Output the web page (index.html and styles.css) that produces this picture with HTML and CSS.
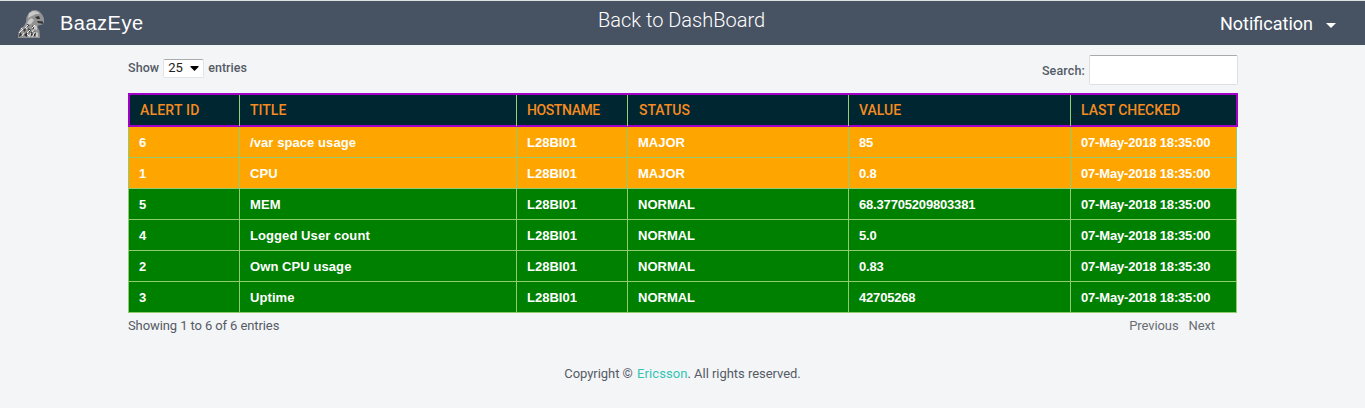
FILE: index.html
```html
<!DOCTYPE html>
<html lang="en">
<head>
<meta charset="utf-8">
<title>BaazEye</title>
<link rel="stylesheet" href="styles.css">
</head>
<body>
<header class="navbar">
  <a class="brand"><svg class="logo" viewBox="0 0 28 30" aria-hidden="true">
    <path d="M0 29 .5 23 3 19 6 17 8 13 8.5 8 11 4 14 1.5 18 1 21.5 2.5 24.5 6 26 9.5 26 14.5 23.5 12.5 21 13 25 15.5 20 16.5 19.5 18 21.5 22 22 29Z" fill="#929292"/>
    <path d="M11 4 15 2 19 2.5 22 5 18 5 14 7 10 9ZM10 12 13 9 16 11 13 15 8 18ZM16 16 19 17 19 21 16 20ZM18 23 20 24 20 28 18 28Z" fill="#c8c8c8"/>
    <path d="M17 8 21 7 22 10 19 10ZM19 12 25 12.5 24.5 14.5 20 14ZM1 28 2 23 4 26ZM5 21 8 19 7 23ZM6 26 9 23 9 28ZM10 19 13 21 11 24ZM12 25 14 22 15 28ZM14 16 17 20 15 21ZM16 22 18 25 16 28ZM9 15 12 16 9 18Z" fill="#333"/>
    <path d="m1 24 3-3m0 6 2-3M7 19l3-3m-1 8 3-3m-1 7 2-4m1-5 3-3m-3 7 3-4m-3 9 3-5m-14-4 2 2m2-3 2 2m0 5 2 2" stroke="#eee" stroke-width="1"/>
  </svg><span class="brand-name">BaazEye</span></a>
  <a class="back">Back to DashBoard</a>
  <a class="notification"><span>Notification</span><i class="caret"></i></a>
</header>
<main class="content">
  <div class="controls">
    <label class="length"><span>Show</span><span class="select"><span>25</span><svg width="9" height="5" viewBox="0 0 9 5"><path d="M.5 0h8v1L4.5 5 .5 1Z"/></svg></span><span>entries</span></label>
    <label class="search"><span>Search:</span><input type="text"></label>
  </div>
  <table class="alerts">
    <thead><tr><th>ALERT ID</th><th>TITLE</th><th class="hostname">HOSTNAME</th><th class="status">STATUS</th><th>VALUE</th><th>LAST CHECKED</th></tr></thead>
    <tbody>
      <tr class="major"><td>6</td><td>/var space usage</td><td>L28BI01</td><td>MAJOR</td><td>85</td><td>07-May-2018 18:35:00</td></tr>
      <tr class="major"><td>1</td><td>CPU</td><td>L28BI01</td><td>MAJOR</td><td>0.8</td><td>07-May-2018 18:35:00</td></tr>
      <tr><td>5</td><td>MEM</td><td>L28BI01</td><td>NORMAL</td><td>68.37705209803381</td><td>07-May-2018 18:35:00</td></tr>
      <tr><td>4</td><td>Logged User count</td><td>L28BI01</td><td>NORMAL</td><td>5.0</td><td>07-May-2018 18:35:00</td></tr>
      <tr><td>2</td><td>Own CPU usage</td><td>L28BI01</td><td>NORMAL</td><td>0.83</td><td>07-May-2018 18:35:30</td></tr>
      <tr><td>3</td><td>Uptime</td><td>L28BI01</td><td>NORMAL</td><td>42705268</td><td>07-May-2018 18:35:00</td></tr>
    </tbody>
  </table>
  <div class="table-footer"><span>Showing 1 to 6 of 6 entries</span><nav class="pager"><a>Previous</a><a>Next</a></nav></div>
</main>
<footer class="copyright">Copyright © <a>Ericsson</a>. All rights reserved.</footer>
</body>
</html>
```

FILE: styles.css
```css
* { box-sizing: border-box; }
body { margin: 0; height: 408px; overflow: hidden; background: #f3f5f7; color: #555b65; font: 13px/20px Roboto, sans-serif; }
.navbar { display: grid; grid-template-columns: 1fr auto 1fr; height: 45px; border-top: 1px solid #dde3e1; background: #475263; color: #fff; }
.brand { display: flex; align-items: center; padding-left: 18px; }
.logo { width: 28px; height: 30px; margin-top: 2px; }
.brand-name { margin-left: 14px; font: 20px/24px "Liberation Sans", Arial, sans-serif; letter-spacing: .5px; }
.back { padding: 9px 2px 0 0; font-size: 20px; font-weight: 300; }
.notification { display: flex; justify-content: flex-end; align-items: center; padding: 2px 29px 0 0; font-size: 18px; }
.caret { margin: 3px 0 0 13px; border: 5px solid transparent; border-top-color: #fff; border-bottom: 0; }
.content { width: 1110px; margin-left: 128px; }
.controls { display: flex; justify-content: space-between; height: 48px; font-weight: 500; font-size: 12.5px; letter-spacing: .06px; }
.length { display: flex; align-items: center; gap: 4px; height: 20px; margin-top: 13px; }
.select { display: flex; align-items: center; justify-content: space-between; width: 41px; height: 19px; padding: 0 4px; border: 1px solid #e1e5e9; border-top-color: #ababb1; border-radius: 2px; background: #fff; color: #222; font-weight: 400; font-size: 13px; }
.search { display: flex; gap: 4px; line-height: 32px; margin-top: 10px; letter-spacing: .15px; }
.search input { width: 149px; height: 30px; padding: 4px; border: 1px solid #dce1e8; border-top-color: #a9a9af; border-radius: 2px; background: #fff; }
.alerts { display: block; }
.alerts thead, .alerts tbody { display: block; }
.alerts tr { display: grid; grid-template-columns: 111px 277px 111px 221px 222px 1fr; }
.alerts thead tr { grid-template-columns: 109px 277px 111px 221px 222px 1fr; height: 34px; border: 2px solid #a000c8; background: #002632; }
.alerts th { padding: 0 0 0 10px; border-left: 1px solid #98cf73; color: #f68b1f; font: 500 14px/31px Roboto, sans-serif; text-align: left; }
.alerts th:first-child { border-left: 0; letter-spacing: .2px; }
.alerts .hostname { letter-spacing: -.4px; }
.alerts .status { padding-left: 11px; }
.alerts tbody { width: 1109px; }
.alerts tbody tr { height: 31px; border-bottom: 1px solid #91cc70; border-right: 1px solid #91cc70; background: green; }
.alerts .major { background: orange; }
.alerts td { padding: 1px 0 0 10px; border-left: 1px solid #91cc70; color: #fff; font: bold 13px/30px "Liberation Sans", Arial, sans-serif; }
.alerts td:nth-child(2) { letter-spacing: .08px; }
.alerts td:nth-child(n+5) { letter-spacing: -.18px; }
.table-footer { display: flex; justify-content: space-between; padding: 3px 23px 0 0; letter-spacing: -.1px; }
.pager { display: flex; gap: 10px; color: #6a6d72; }
.copyright { margin-top: 28px; text-align: center; letter-spacing: -.04px; }
.copyright a { margin-left: 1px; color: #32c5b4; letter-spacing: .1px; }
```
